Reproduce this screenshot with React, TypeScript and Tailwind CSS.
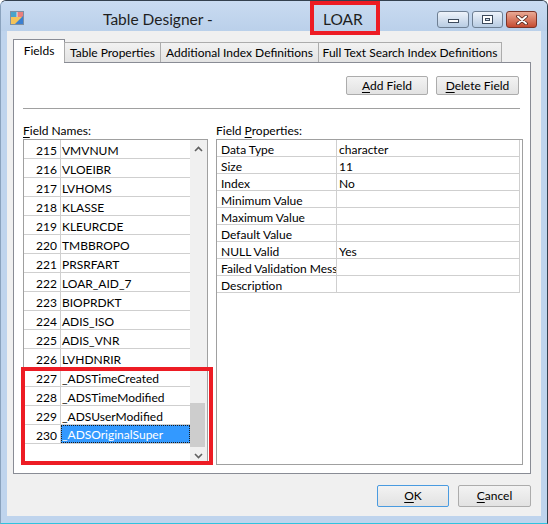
import React from "react";

const fields: [number, string][] = [
  [215, "VMVNUM"],
  [216, "VLOEIBR"],
  [217, "LVHOMS"],
  [218, "KLASSE"],
  [219, "KLEURCDE"],
  [220, "TMBBROPO"],
  [221, "PRSRFART"],
  [222, "LOAR_AID_7"],
  [223, "BIOPRDKT"],
  [224, "ADIS_ISO"],
  [225, "ADIS_VNR"],
  [226, "LVHDNRIR"],
  [227, "_ADSTimeCreated"],
  [228, "_ADSTimeModified"],
  [229, "_ADSUserModified"],
  [230, "_ADSOriginalSuper"],
];

const props: [string, string][] = [
  ["Data Type", "character"],
  ["Size", "11"],
  ["Index", "No"],
  ["Minimum Value", ""],
  ["Maximum Value", ""],
  ["Default Value", ""],
  ["NULL Valid", "Yes"],
  ["Failed Validation Message", ""],
  ["Description", ""],
];

function TitleIcon() {
  return (
    <svg width="16" height="16" viewBox="0 0 16 16" className="mt-[9px] ml-[8px] shrink-0">
      <rect x="1.5" y="1.5" width="13" height="13" fill="#f4c35a" stroke="#7d8fa3" />
      <rect x="2" y="2" width="6" height="5" fill="#4aa3c9" />
      <rect x="8" y="2" width="6" height="5" fill="#ea7f7c" />
      <polygon points="14,6 14,14 6,14" fill="#3b7fd0" />
      <line x1="8" y1="2" x2="8" y2="7" stroke="#ffffff" strokeWidth="0.8" />
    </svg>
  );
}

function Chevron({ up }: { up: boolean }) {
  return (
    <svg width="9" height="6" viewBox="0 0 9 6">
      <polyline
        points={up ? "1,5 4.5,1.5 8,5" : "1,1 4.5,4.5 8,1"}
        fill="none"
        stroke="#606060"
        strokeWidth="1.6"
      />
    </svg>
  );
}

function WinButton({ children, w, cls }: { children: React.ReactNode; w: string; cls: string }) {
  return (
    <button
      className={`${w} h-[22px] rounded-[2px] bg-linear-to-b from-[#f3f3f3] to-[#e2e2e2] ${cls} flex items-center justify-center text-[12px] text-black`}
    >
      {children}
    </button>
  );
}

export default function App() {
  return (
    <div className="w-[548px] h-[524px] bg-white">
      <div className="relative w-[548px] h-[524px] flex flex-col bg-[#bfd4ed] border border-[#34404e] border-l-[#8aa2bd] border-b-[#2fc3df] rounded-t-[6px] overflow-hidden font-['Segoe_UI',Lato,sans-serif] text-[12px] text-black">
        {/* Title bar */}
        <div className="h-[30px] shrink-0 flex items-start bg-linear-to-b from-[#c9dbf1] to-[#bad0ea]">
          <TitleIcon />
          <span className="mt-[8px] ml-[78px] w-[220px] text-[15.5px] leading-[20px] text-[#1e1e1e]">
            Table Designer -
          </span>
          <span className="mt-[8px] text-[15.5px] leading-[20px] text-[#1e1e1e]">LOAR</span>
          <div className="ml-auto mr-[10px] mt-[10px] flex gap-[3px]">
            <div className="w-[32px] h-[17px] rounded-[3px] border border-[#6e7f93] bg-linear-to-b from-[#eef3fa] to-[#b8cce3] flex items-center justify-center">
              <div className="w-[11px] h-[4px] mt-[3px] bg-white border border-[#3c4a5c]" />
            </div>
            <div className="w-[31px] h-[17px] rounded-[3px] border border-[#6e7f93] bg-linear-to-b from-[#eef3fa] to-[#b8cce3] flex items-center justify-center">
              <div className="w-[11px] h-[9px] bg-white border border-[#3c4a5c] p-[2px]">
                <div className="w-full h-full border border-[#3c4a5c] bg-[#d2deec]" />
              </div>
            </div>
            <div className="w-[31px] h-[17px] rounded-[3px] border border-[#7c3428] bg-linear-to-b from-[#e9a995] to-[#c54a30] flex items-center justify-center">
              <svg width="12" height="10" viewBox="0 0 12 10">
                <path d="M2 1.5 L10 8.5 M10 1.5 L2 8.5" stroke="#4a2018" strokeWidth="3.6" strokeLinecap="round" />
                <path d="M2 1.5 L10 8.5 M10 1.5 L2 8.5" stroke="#ffffff" strokeWidth="2" strokeLinecap="round" />
              </svg>
            </div>
          </div>
        </div>

        {/* Client area */}
        <div className="mx-[6px] mb-[7px] flex-1 bg-[#f0f0f0] flex flex-col pt-[8px] pl-[6px] pr-[10px] pb-[9px]">
          {/* Tabs */}
          <div className="h-[23px] flex items-end relative z-10">
            <div className="w-[52px] h-[24px] -mb-px bg-white border border-b-0 border-[#898c95] flex items-center justify-center pb-[1px]">
              Fields
            </div>
            <div className="w-[97px] h-[20px] -ml-px bg-linear-to-b from-[#f2f2f2] to-[#e3e3e3] border border-b-0 border-[#acacac] flex items-center justify-center">
              Table Properties
            </div>
            <div className="w-[159px] h-[20px] -ml-px bg-linear-to-b from-[#f2f2f2] to-[#e3e3e3] border border-b-0 border-[#acacac] flex items-center justify-center">
              Additional Index Definitions
            </div>
            <div className="w-[184px] h-[20px] -ml-px bg-linear-to-b from-[#f2f2f2] to-[#e3e3e3] border border-b-0 border-[#acacac] flex items-center justify-center">
              Full Text Search Index Definitions
            </div>
          </div>

          {/* Panel */}
          <div className="h-[412px] shrink-0 border border-[#898c95] bg-white flex flex-col pt-[13px] pl-[9px] pr-[10px] pb-[8px]">
            <div className="flex justify-end gap-[8px] pr-[1px]">
              <button className="w-[82px] h-[19px] rounded-[2px] border border-[#acacac] bg-linear-to-b from-[#f3f3f3] to-[#e2e2e2] flex items-center justify-center">
                <span>
                  <span className="underline underline-offset-[2px]">A</span>dd Field
                </span>
              </button>
              <button className="w-[83px] h-[19px] rounded-[2px] border border-[#acacac] bg-linear-to-b from-[#f3f3f3] to-[#e2e2e2] flex items-center justify-center">
                <span>
                  <span className="underline underline-offset-[2px]">D</span>elete Field
                </span>
              </button>
            </div>
            <div className="mt-[13px] h-px bg-[#a0a0a0]" />

            <div className="mt-[13px] flex gap-[8px]">
              {/* Field names */}
              <div className="flex flex-col">
                <div className="h-[15px] pt-[1px] leading-[15px] mb-[2px]">
                  <span className="underline underline-offset-[2px]">F</span>ield Names:
                </div>
                <div className="w-[185px] h-[326px] border border-[#a0a0a0] bg-white flex">
                  <div className="w-[166px] flex flex-col">
                    {fields.map(([n, name]) => {
                      const sel = n === 230;
                      return (
                        <div key={n} className="h-[19px] flex border-b border-[#cfcfcf] leading-[15px]">
                          <div className="w-[37px] pt-[3px] text-right pr-[3px] border-r border-[#cfcfcf]">{n}</div>
                          <div className="flex-1 min-w-0">
                            {sel ? (
                              <div className="h-[18px] pt-[2px] bg-[#3399ff] text-white border border-dotted border-[#1a1a1a] leading-[14px] whitespace-nowrap overflow-hidden">
                                {name}
                              </div>
                            ) : (
                              <div className="pt-[3px] pl-[1px] whitespace-nowrap overflow-hidden">{name}</div>
                            )}
                          </div>
                        </div>
                      );
                    })}
                  </div>
                  <div className="w-[17px] bg-[#f0f0f0] flex flex-col">
                    <div className="h-[17px] flex items-center justify-center">
                      <Chevron up />
                    </div>
                    <div className="flex-1 flex flex-col justify-end">
                      <div className="w-[15px] h-[44px] bg-[#cdcdcd]" />
                    </div>
                    <div className="h-[17px] flex items-center justify-center">
                      <Chevron up={false} />
                    </div>
                  </div>
                </div>
              </div>

              {/* Field properties */}
              <div className="flex flex-col">
                <div className="h-[15px] pt-[1px] leading-[15px] mb-[2px]">
                  Field <span className="underline underline-offset-[2px]">P</span>roperties:
                </div>
                <div className="w-[307px] h-[326px] border border-[#a0a0a0] bg-white flex flex-col">
                  {props.map(([k, v]) => (
                    <div key={k} className="h-[17px] flex leading-[13px]">
                      <div className="w-[120px] pt-[3px] pl-[4px] border-r border-b border-[#cfcfcf] whitespace-nowrap overflow-hidden">
                        {k}
                      </div>
                      <div className="w-[183px] pt-[3px] pl-[2px] border-r border-b border-[#cfcfcf] whitespace-nowrap overflow-hidden">
                        {v}
                      </div>
                    </div>
                  ))}
                </div>
              </div>
            </div>
          </div>

          {/* Dialog buttons */}
          <div className="mt-[11px] flex justify-end gap-[9px]">
            <WinButton w="w-[72px]" cls="border border-[#4a9be0]">
              <span>
                <span className="underline underline-offset-[2px]">O</span>K
              </span>
            </WinButton>
            <WinButton w="w-[73px]" cls="border border-[#acacac]">
              <span>
                <span className="underline underline-offset-[2px]">C</span>ancel
              </span>
            </WinButton>
          </div>
        </div>

        {/* Red highlight overlays */}
        <div className="absolute left-[309px] top-0 w-[70px] h-[34px] border-4 border-[#ed1c24] pointer-events-none" />
        <div className="absolute left-[20px] top-[366px] w-[192px] h-[98px] border-4 border-[#ed1c24] pointer-events-none" />
      </div>
    </div>
  );
}
